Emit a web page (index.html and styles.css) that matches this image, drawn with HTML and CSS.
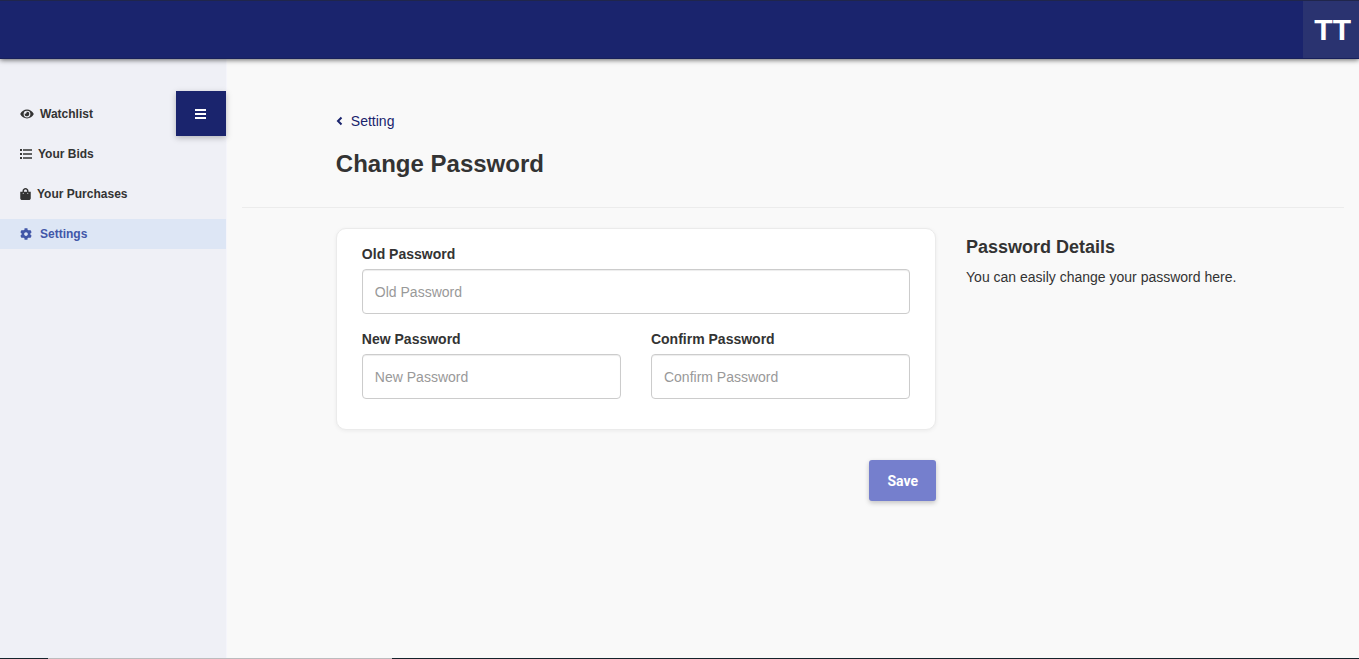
FILE: index.html
```html
<!DOCTYPE html>
<html lang="en">
<head>
<meta charset="utf-8">
<title>Change Password</title>
<link rel="stylesheet" href="styles.css">
</head>
<body>
<header class="topbar"><a class="avatar" href="#">TT</a></header>
<div class="layout">
  <aside class="sidebar">
    <nav class="menu">
      <a class="menu-item" href="#"><svg width="14" height="12" viewBox="0 0 576 512"><path fill="currentColor" d="M572.5 241.4C518.3 135.600 410.900 64 288 64S57.700 135.600 3.500 241.400a32.400 32.400 0 0 0 0 29.200C57.700 376.400 165.100 448 288 448s230.300-71.600 284.500-177.400a32.400 32.400 0 0 0 0-29.200zM288 400a144 144 0 1 1 144-144 143.900 143.900 0 0 1-144 144zm0-240a95.300 95.300 0 0 0-25.300 3.800 47.900 47.900 0 0 1-66.900 66.900A95.800 95.800 0 1 0 288 160z"/></svg>Watchlist</a>
      <a class="menu-item" href="#"><svg width="12" height="12" viewBox="0 0 12 12"><path fill="currentColor" d="M0 1h2v2H0zM0 5h2v2H0zM0 9h2v2H0zM3 1.300h9v1.500H3zM3 5.300h9v1.500H3zM3 9.300h9v1.500H3z"/></svg>Your Bids</a>
      <a class="menu-item" href="#"><svg width="11" height="12" viewBox="0 0 448 512"><path fill="currentColor" d="M352 160v-32C352 57.400 294.600 0 224 0S96 57.400 96 128v32H0v272c0 44.200 35.800 80 80 80h288c44.200 0 80-35.800 80-80V160zm-192-32c0-35.300 28.700-64 64-64s64 28.700 64 64v32H160zm160 120a24 24 0 1 1 0-48 24 24 0 0 1 0 48zm-192 0a24 24 0 1 1 0-48 24 24 0 0 1 0 48z"/></svg>Your Purchases</a>
      <a class="menu-item active" href="#" aria-current="page"><svg width="12" height="12" viewBox="0 0 512 512"><path fill="currentColor" d="M487.400 315.700l-42.600-24.600c4.300-23.200 4.300-47 0-70.200l42.600-24.600c4.900-2.800 7.100-8.600 5.500-14-11.100-35.600-30-67.800-54.700-94.600-3.800-4.100-10-5.100-14.800-2.300L380.800 110c-17.900-15.400-38.500-27.300-60.800-35.100V25.800c0-5.600-3.900-10.500-9.400-11.700-36.700-8.200-74.300-7.800-109.200 0-5.500 1.200-9.400 6.100-9.400 11.700V75c-22.200 7.900-42.800 19.800-60.800 35.100L88.700 85.500c-4.900-2.800-11-1.900-14.800 2.300-24.700 26.700-43.600 58.900-54.700 94.600-1.700 5.400.6 11.200 5.500 14L67.300 221c-4.300 23.200-4.300 47 0 70.200l-42.600 24.600c-4.900 2.800-7.100 8.600-5.500 14 11.100 35.600 30 67.800 54.700 94.600 3.800 4.100 10 5.100 14.800 2.300l42.600-24.600c17.900 15.400 38.500 27.300 60.800 35.100v49.200c0 5.600 3.900 10.500 9.400 11.700 36.700 8.200 74.300 7.800 109.200 0 5.500-1.200 9.400-6.100 9.400-11.700v-49.200c22.200-7.900 42.800-19.800 60.800-35.100l42.600 24.600c4.900 2.800 11 1.900 14.800-2.300 24.700-26.700 43.600-58.900 54.700-94.600 1.500-5.500-.7-11.300-5.600-14.100zM256 336c-44.100 0-80-35.900-80-80s35.900-80 80-80 80 35.900 80 80-35.900 80-80 80z"/></svg>Settings</a>
    </nav>
    <button class="toggle" type="button" aria-label="Toggle menu"><svg width="11" height="10" viewBox="0 0 11 10" shape-rendering="crispEdges"><path fill="currentColor" d="M0 0h11v2H0zM0 4h11v2H0zM0 8h11v2H0z"/></svg></button>
  </aside>
  <main class="main">
    <div class="heading">
      <a class="back" href="#"><svg width="7" height="10" viewBox="0 0 7 10"><path fill="none" stroke="currentColor" stroke-width="2" d="M5.500 1.500 2 5l3.500 3.500"/></svg>Setting</a>
      <h1 class="title">Change Password</h1>
    </div>
    <hr class="rule">
    <div class="content">
      <form class="form">
        <div class="card">
          <div class="field">
            <label for="old">Old Password</label>
            <input id="old" type="password" placeholder="Old Password">
          </div>
          <div class="field">
            <label for="new">New Password</label>
            <input id="new" type="password" placeholder="New Password">
          </div>
          <div class="field">
            <label for="confirm">Confirm Password</label>
            <input id="confirm" type="password" placeholder="Confirm Password">
          </div>
        </div>
        <button class="save" type="submit">Save</button>
      </form>
      <section class="details">
        <h2>Password Details</h2>
        <p>You can easily change your password here.</p>
      </section>
    </div>
  </main>
</div>
<div class="bottom-edge"><span class="edge-segment"></span></div>
</body>
</html>
```
FILE: styles.css
```css
* { box-sizing: border-box; }

body {
  margin: 0;
  min-height: 100vh;
  display: flex;
  flex-direction: column;
  background: #f9f9f9;
  color: #333;
  font: 14px/20px "Liberation Sans", Arial, sans-serif;
}

a { color: inherit; text-decoration: none; }

.topbar {
  position: relative;
  z-index: 1;
  display: flex;
  justify-content: flex-end;
  height: 59px;
  border-top: 1px solid #20264b;
  border-bottom: 1px solid #18205a;
  background: #1a246d;
  box-shadow: 0 1px 5px rgba(0, 0, 0, 0.6);
}

.avatar {
  display: flex;
  align-items: center;
  padding: 0 8px 0 11px;
  background: #2a3370;
  color: #fff;
  font-size: 30px;
  font-weight: bold;
}

.layout { flex: 1; display: flex; }

.sidebar {
  position: relative;
  width: 16.6667%;
  padding-top: 40px;
  border-right: 1px solid #f5f5fb;
  background: #eff0f6;
}

.menu { display: flex; flex-direction: column; gap: 10px; }

.menu-item {
  display: flex;
  align-items: center;
  gap: 6px;
  height: 30px;
  padding: 0 20px;
  font-size: 12px;
  font-weight: bold;
}

.menu-item.active { background: #dde6f5; color: #4257a8; }
.menu-item.active svg { margin-right: 2px; }

.toggle {
  position: absolute;
  top: 32px;
  right: 0;
  display: flex;
  align-items: center;
  justify-content: center;
  width: 50px;
  height: 45px;
  padding: 0;
  border: 0;
  background: #1a246d;
  color: #fff;
  box-shadow: 0 2px 6px rgba(0, 0, 0, 0.25);
}

.main { flex: 1; padding-top: 52px; }

.heading { padding-left: calc(8.3333% + 15px); }

.back {
  display: inline-flex;
  align-items: center;
  gap: 8px;
  color: #1a246d;
}

.title {
  margin: 19px 0 29px;
  font-size: 24px;
  line-height: 28px;
}

.rule {
  margin: 0 15px 20px;
  border: 0;
  border-top: 1px solid #ececec;
}

.content { display: flex; padding: 0 8.2% 0 8.3333%; }

.form {
  width: 66.6667%;
  padding: 0 15px;
  display: flex;
  flex-direction: column;
  align-items: flex-end;
  gap: 30px;
}

.card {
  width: 100%;
  display: grid;
  grid-template-columns: 1fr 1fr;
  gap: 15px 30px;
  padding: 15px 25px 30px;
  border: 1px solid #ebebeb;
  border-radius: 10px;
  background: #fff;
  box-shadow: 0 1px 4px rgba(0, 0, 0, 0.06);
}

.field { display: flex; flex-direction: column; gap: 5px; }
.field:first-child { grid-column: 1 / -1; }
.field label { font-weight: bold; }

.field input {
  width: 100%;
  height: 45px;
  padding: 0 12px;
  border: 1px solid #ccc;
  border-radius: 4px;
  background: #fff;
  box-shadow: inset 0 1px 1px rgba(0, 0, 0, 0.075);
  color: #333;
  font: inherit;
}

.field input::placeholder { color: #999; opacity: 1; }

.save {
  height: 41px;
  padding: 0 18px;
  border: 0;
  border-radius: 3px;
  background: #757fcd;
  color: #fff;
  font: bold 14px/20px Roboto, sans-serif;
  box-shadow: 0 2px 5px rgba(0, 0, 0, 0.22);
}

.details { width: 33.3333%; padding: 9px 15px 0; }
.details h2 { margin: 0 0 10px; font-size: 18px; line-height: 20px; }
.details p { margin: 0; }

.bottom-edge {
  position: fixed;
  right: 0;
  bottom: 0;
  left: 0;
  height: 1px;
  padding-left: 48px;
  background: #14242c;
}

.edge-segment { display: block; width: 344px; height: 1px; background: #bcbcbe; }
```
